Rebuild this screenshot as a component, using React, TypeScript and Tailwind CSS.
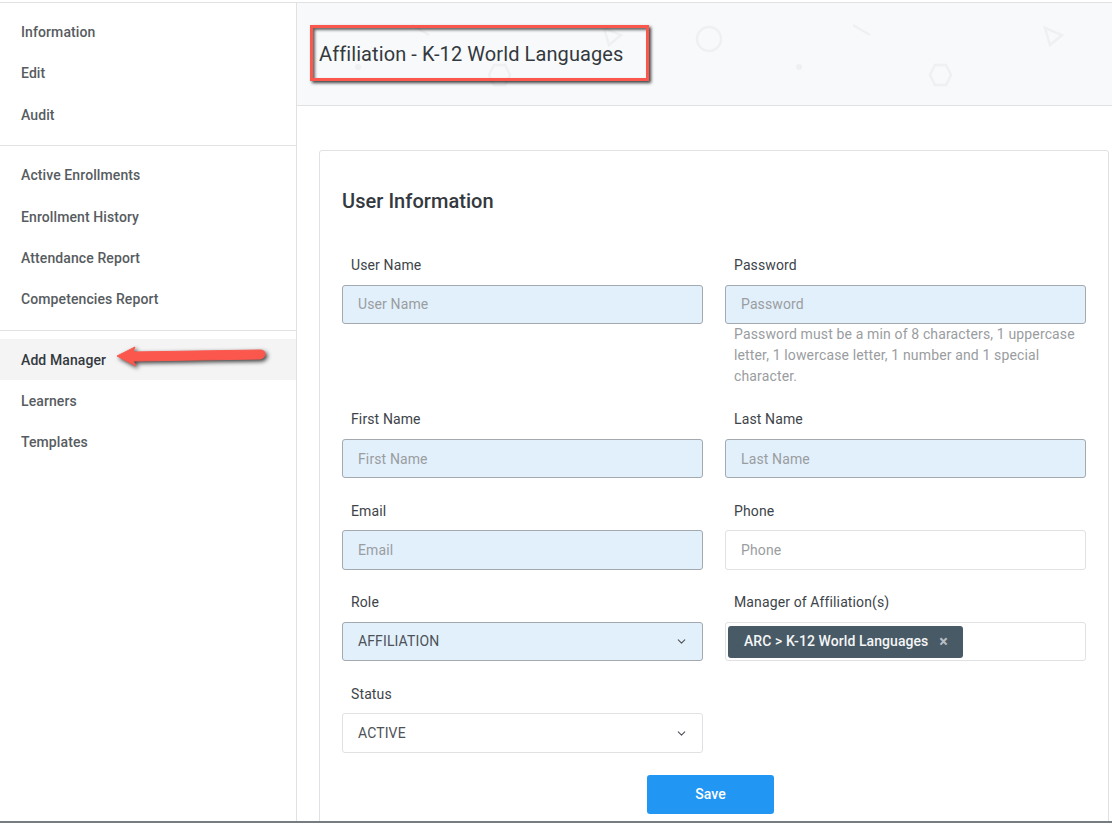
import React from 'react';
import { ChevronDown } from 'lucide-react';

const navGroups = [
  ['Information', 'Edit', 'Audit'],
  ['Active Enrollments', 'Enrollment History', 'Attendance Report', 'Competencies Report'],
  ['Add Manager', 'Learners', 'Templates'],
];

const Label: React.FC<{ text: string }> = ({ text }) => (
  <div className="h-[30px] pl-[9px] pt-[0.5px] text-[14px] leading-[20px] tracking-[0.12px] text-[#3d4449]">{text}</div>
);

const Field: React.FC<{ label: string; filled?: boolean; children?: React.ReactNode }> = ({ label, filled, children }) => (
  <div className="mb-[22px]">
    <Label text={label} />
    <div
      className={`flex h-[39.5px] items-center rounded-[3px] border px-[15px] pt-[1px] text-[14px] tracking-[0.12px] text-[#9a9da0] ${
        filled ? 'border-[#a3a9ae] bg-[#e2f0fc]' : 'border-[#dfe1e3] bg-white'
      }`}
    >
      {label}
    </div>
    {children}
  </div>
);

const SelectField: React.FC<{ label: string; value: string; filled?: boolean }> = ({ label, value, filled }) => (
  <div className="mb-[22px]">
    <Label text={label} />
    <div
      className={`flex h-[39.5px] items-center justify-between rounded-[3px] border pl-[15px] pr-[14px] text-[14px] tracking-[0.12px] text-[#4d5257] ${
        filled ? 'border-[#a3a9ae] bg-[#e2f0fc]' : 'border-[#dfe1e3] bg-white'
      }`}
    >
      {value}
      <ChevronDown size={13} strokeWidth={2} className="text-[#4d5257]" />
    </div>
  </div>
);

const Shapes: React.FC<{ x: number }> = ({ x }) => (
  <g transform={`translate(${x} 0)`} fill="none" stroke="#eff0f2" strokeWidth="2.5">
    <circle cx="412" cy="36" r="12" />
    <line x1="556" y1="22" x2="573" y2="32" />
    <circle cx="502" cy="64" r="3" fill="#eff0f2" stroke="none" />
    <polygon points="633,72 638,62 649,62 654,72 649,82 638,82" />
    <polygon points="748,25 765,32 753,42" />
  </g>
);

export default function App() {
  return (
    <div className="relative h-[824px] w-[1112px] overflow-hidden bg-white font-['Roboto',sans-serif]">
      <div className="flex h-[823px] border-b-2 border-[#777c80] pt-[2px]">
        <div className="h-full w-[297px] shrink-0 border-r border-t border-[#dfe1e3]">
          {navGroups.map((group, g) => (
            <div
              key={g}
              className={
                g === 0
                  ? 'border-b border-[#dfe1e3] pt-[9px] pb-[9px]'
                  : g === 1
                    ? 'border-b border-[#dfe1e3] pt-[9.4px] pb-[9.4px]'
                    : 'pt-[8px]'
              }
            >
              {group.map(item => (
                <div
                  key={item}
                  className={`flex h-[41.3px] items-center pl-[21px] text-[14px] font-medium tracking-[0.1px] ${
                    g === 2 ? 'pt-[1.5px]' : ''
                  } ${item === 'Add Manager' ? 'bg-[#f4f4f4] text-[#33393e]' : 'text-[#575c61]'}`}
                >
                  {item}
                </div>
              ))}
            </div>
          ))}
        </div>

        <div className="min-w-0 flex-1 overflow-hidden">
          <div className="relative flex h-[104px] items-center border-y border-[#dfe1e3] bg-[#f8f9fb] pl-[22px]">
            <svg className="absolute left-0 top-0" width="816" height="102">
              <Shapes x={0} />
              <Shapes x={-441} />
            </svg>
            <h1 className="relative text-[20px] font-normal leading-[30px] tracking-[0.09px] text-[#33393e]">
              Affiliation - K-12 World Languages
            </h1>
          </div>

          <div className="ml-[22px] mr-[3px] mt-[44px] h-[800px] rounded-[3px] border border-[#dfe1e3] px-[22px]">
            <h2 className="mt-[38px] mb-[41.5px] text-[20px] font-medium leading-[24px] tracking-[0.05px] text-[#33393e]">
              User Information
            </h2>
            <div className="grid w-[744px] grid-cols-2 gap-x-[22px]">
              <Field label="User Name" filled />
              <div className="-mb-[0.25px]">
                <Field label="Password" filled>
                  <p className="pl-[9px] pr-[8px] text-[14px] leading-[21px] tracking-[0.14px] text-[#9a9da0]">
                    Password must be a min of 8 characters, 1 uppercase letter, 1 lowercase letter, 1 number and 1 special character.
                  </p>
                </Field>
              </div>
              <Field label="First Name" filled />
              <Field label="Last Name" filled />
              <Field label="Email" filled />
              <Field label="Phone" />
              <SelectField label="Role" value="AFFILIATION" filled />
              <div className="mb-[22px]">
                <Label text="Manager of Affiliation(s)" />
                <div className="flex h-[39.5px] items-center rounded-[3px] border border-[#dfe1e3] bg-white pl-[2px]">
                  <span className="flex h-[32px] items-center rounded-[3px] bg-[#485a65] pl-[16px] pr-[15px] text-[14px] font-medium tracking-[0.07px] text-[#f4f6f7]">
                    ARC &gt; K-12 World Languages
                    <span className="ml-[11px] text-[16px] font-bold leading-none text-[#b8c0c5]">×</span>
                  </span>
                </div>
              </div>
              <SelectField label="Status" value="ACTIVE" />
            </div>
            <div className="ml-[305px] flex h-[39px] w-[127px] items-center justify-center rounded-[3px] bg-[#2196f3] text-[14px] font-medium text-white">
              Save
            </div>
          </div>
        </div>
      </div>

      {/* annotations drawn over the screenshot */}
      <div className="absolute left-[310px] top-[25px] h-[56px] w-[339px] border-[3px] border-[#fb574d] shadow-[2px_2px_3px_rgba(0,0,0,0.75),inset_2px_2px_3px_rgba(0,0,0,0.6)]" />
      <svg className="absolute left-[110px] top-[340px] drop-shadow-[2px_2px_2px_rgba(0,0,0,0.75)]" width="165" height="35">
        <path
          d="M7 16 L25 7 L23 12 L150 10 Q155 10 155 14 Q155 18 150 19 L23 21 L26 26 Z"
          fill="#fb574d"
          stroke="#fb574d"
          strokeLinejoin="round"
        />
      </svg>
    </div>
  );
}
